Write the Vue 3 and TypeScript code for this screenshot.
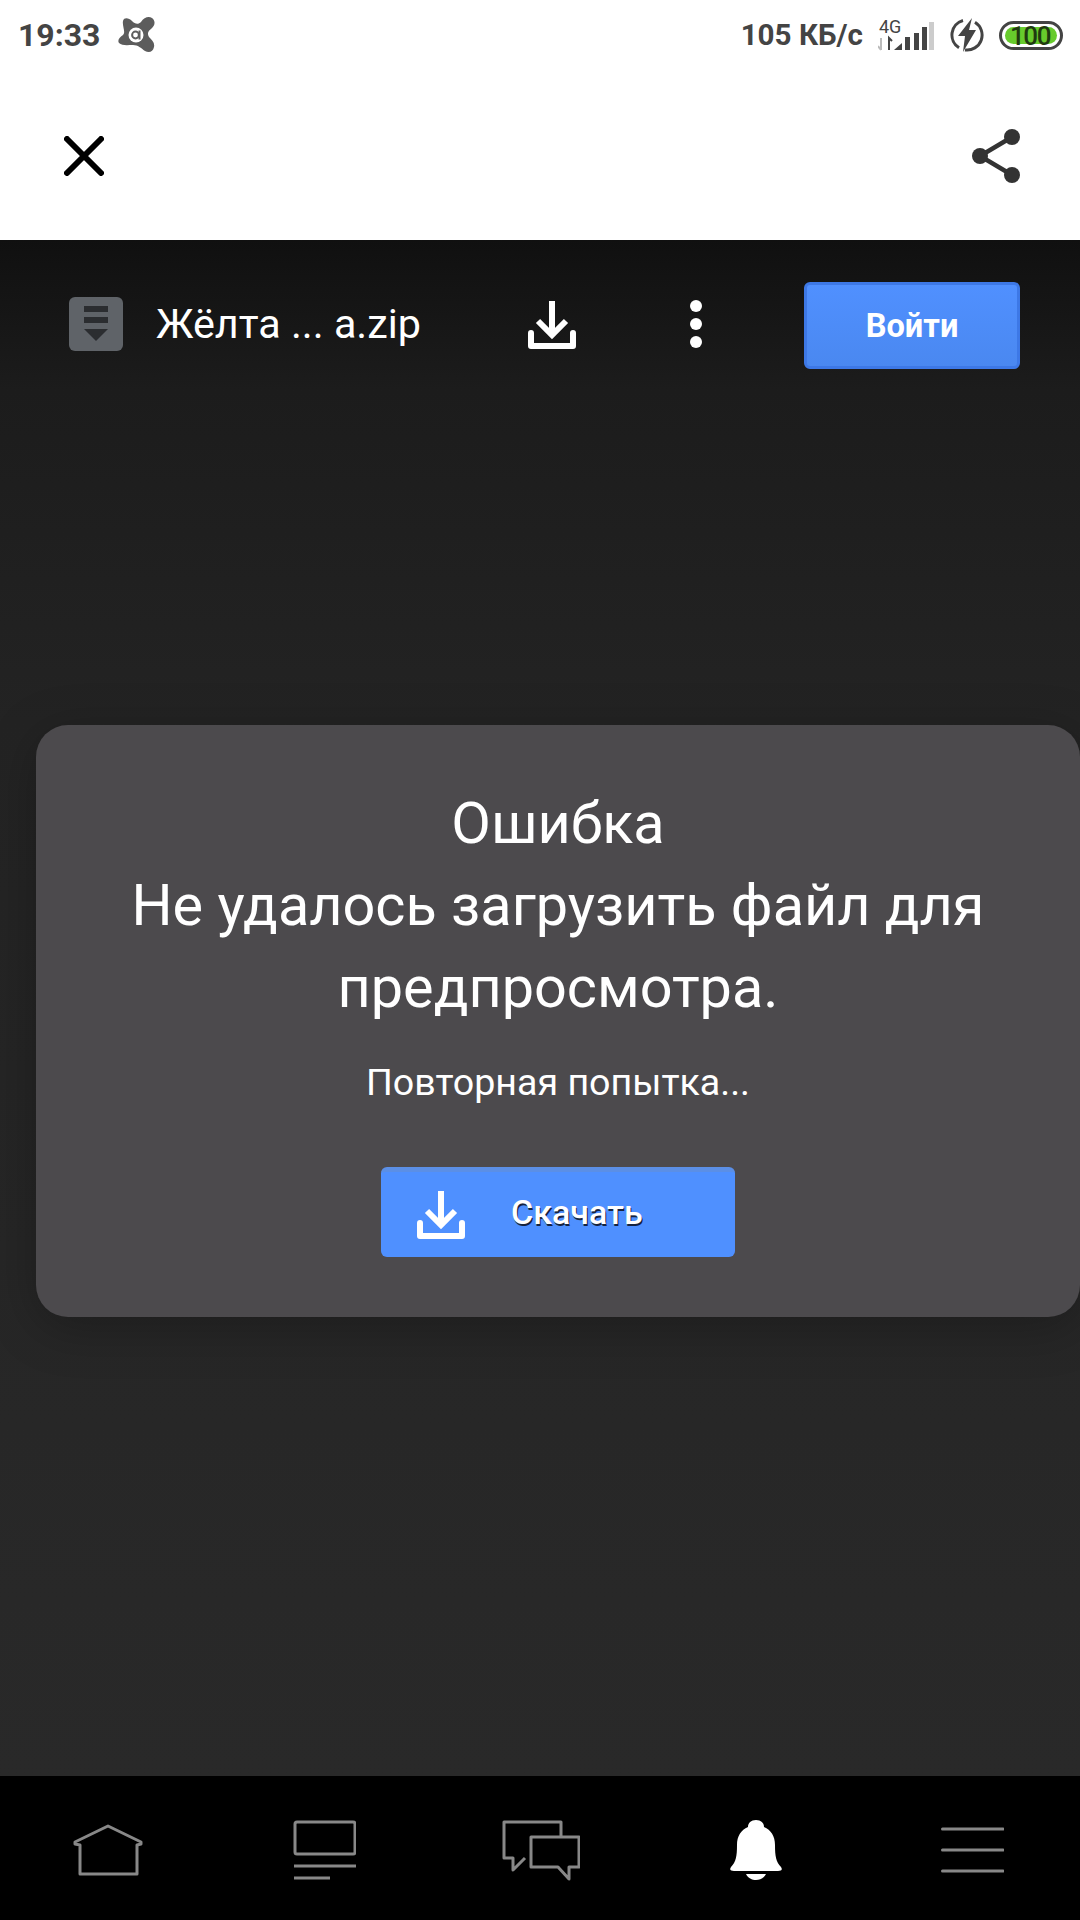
<script setup lang="ts">
const fileName = 'Жёлта ... a.zip';
</script>

<template>
  <div class="screen">
    <!-- Android status bar -->
    <div class="status-bar">
      <div class="status-left">
        <span class="clock">19:33</span>
        <svg class="avast" width="38" height="38" viewBox="0 0 38 38">
          <path d="M5 5 C6 1 11 2 14 5 C17 8 20 9 23 6 C26 1 31 0 34 2 C38 5 37 10 33 13 C30 15 29 18 31 21 C34 24 37 27 36 31 C35 36 31 37 27 35 C23 32 20 29 15 29 C10 29 4 30 1 27 C-1 24 2 21 5 19 C8 16 4 10 5 5 Z" fill="#5c5c5c" />
          <circle cx="18" cy="19" r="7.5" fill="#fff" />
          <circle cx="17.5" cy="19" r="3.4" fill="none" stroke="#5c5c5c" stroke-width="2" />
          <path d="M21.5 14.5 V23.5" stroke="#5c5c5c" stroke-width="2" />
        </svg>
      </div>
      <div class="status-right">
        <span class="speed">105 КБ/с</span>
        <svg class="signal" width="58" height="40" viewBox="0 -6 58 40">
          <text x="1" y="12" class="net-label">4G</text>
          <path d="M3 17 V29 M0 25 L3 29" stroke="#bbb" stroke-width="2" fill="none" />
          <path d="M11 29 V17 L14 20" stroke="#444" stroke-width="2" fill="none" />
          <path d="M16 29 L24 22 V29 Z" fill="#444" />
          <rect x="27" y="16" width="5" height="13" fill="#444" />
          <rect x="36" y="12" width="5" height="17" fill="#444" />
          <rect x="44" y="6" width="5" height="23" fill="#444" />
          <rect x="51" y="1" width="5" height="28" fill="#ccc" />
        </svg>
        <svg class="charge" width="34" height="34" viewBox="0 0 34 34">
          <path d="M13 2.5 A15 15 0 0 0 9 29.7 M25 4.3 A15 15 0 0 1 15 31.9" fill="none" stroke="#444" stroke-width="3" />
          <path d="M22 0 L8 18 H15 L13 34 L26 12 H19 Z" fill="#444" />
        </svg>
        <svg class="battery" width="64" height="29" viewBox="0 0 64 29">
          <rect x="1.5" y="1.5" width="61" height="26" rx="13" fill="none" stroke="#444" stroke-width="3" />
          <rect x="6" y="6" width="52" height="17" rx="8.5" fill="#67cb2c" />
          <text x="31" y="24" text-anchor="middle" class="battery-label">100</text>
        </svg>
      </div>
    </div>

    <!-- White app bar -->
    <header class="app-bar">
      <svg width="40" height="40" viewBox="0 0 40 40">
        <path d="M3 3 L37 37 M37 3 L3 37" stroke="#000" stroke-width="6" stroke-linecap="round" />
      </svg>
      <svg width="50" height="56" viewBox="0 0 50 56">
        <path d="M41 9 L9 28 L41 47" fill="none" stroke="#333" stroke-width="4.5" />
        <circle cx="41" cy="9" r="8" fill="#333" />
        <circle cx="9" cy="28" r="8" fill="#333" />
        <circle cx="41" cy="47" r="8" fill="#333" />
      </svg>
    </header>

    <!-- Drive preview -->
    <main class="viewer">
      <div class="toolbar">
        <div class="file-icon">
          <svg width="26" height="38" viewBox="0 0 26 38">
            <rect x="1" y="1" width="24" height="6" fill="#2b2d30" />
            <rect x="1" y="12" width="24" height="6" fill="#2b2d30" />
            <path d="M1 24 H25 L13 36 Z" fill="#2b2d30" />
          </svg>
        </div>
        <span class="file-name">{{ fileName }}</span>
        <svg class="tool-download" width="48" height="50" viewBox="0 0 48 50">
          <path d="M24 1 V35 M10 21 L24 35 L38 21" fill="none" stroke="#fff" stroke-width="6" />
          <path d="M3 33 V46 H45 V33" fill="none" stroke="#fff" stroke-width="6" stroke-linejoin="round" stroke-linecap="round" />
        </svg>
        <div class="dots">
          <i></i>
          <i></i>
          <i></i>
        </div>
        <button class="login">Войти</button>
      </div>

      <section class="error-card">
        <div class="error-title">Ошибка</div>
        <div class="error-text">Не удалось загрузить файл для предпросмотра.</div>
        <div class="error-retry">Повторная попытка...</div>
        <button class="download-btn">
          <svg width="48" height="50" viewBox="0 0 48 50">
            <path d="M24 1 V35 M10 21 L24 35 L38 21" fill="none" stroke="#fff" stroke-width="6" />
            <path d="M3 33 V46 H45 V33" fill="none" stroke="#fff" stroke-width="6" stroke-linejoin="round" stroke-linecap="round" />
          </svg>
          <span>Скачать</span>
        </button>
      </section>
    </main>

    <!-- Bottom nav -->
    <nav class="bottom-nav">
      <div class="nav-item">
        <svg width="72" height="52" viewBox="0 0 72 52">
          <path d="M36 2 L69 18 V20 L65 21 V50 H8 V21 L3 20 V18 Z" fill="none" stroke="#888" stroke-width="3" stroke-linejoin="round" />
        </svg>
      </div>
      <div class="nav-item">
        <svg width="64" height="60" viewBox="0 0 64 60">
          <rect x="3" y="2" width="60" height="32" rx="2" fill="none" stroke="#888" stroke-width="3" />
          <path d="M2 46 H64 M2 58 H38" stroke="#888" stroke-width="3" />
        </svg>
      </div>
      <div class="nav-item">
        <svg width="80" height="62" viewBox="0 0 80 62">
          <path d="M61 17 V3 H4 V39 H13 V51 L25 39" fill="none" stroke="#888" stroke-width="3" stroke-linejoin="round" />
          <path d="M31 18 H79 V48 H69 V60 L58 48 H31 Z" fill="none" stroke="#888" stroke-width="3" stroke-linejoin="round" />
        </svg>
      </div>
      <div class="nav-item">
        <svg width="52" height="60" viewBox="0 0 52 60">
          <path d="M26 0 C21 0 18 3 18 7 C11 10 7 16 7 25 C7 36 6 42 1 47 C-1 50 1 51 4 51 H48 C51 51 53 50 51 47 C46 42 45 36 45 25 C45 16 41 10 34 7 C34 3 31 0 26 0 Z" fill="#fff" />
          <path d="M16 54 H36 C34 58 30 60 26 60 C22 60 18 58 16 54 Z" fill="#fff" />
        </svg>
      </div>
      <div class="nav-item">
        <svg width="64" height="46" viewBox="0 0 64 46">
          <path d="M2.5 2 H63 M2.5 23 H63 M2.5 44 H63" stroke="#888" stroke-width="3" stroke-linecap="round" />
        </svg>
      </div>
    </nav>
  </div>
</template>

<style>
html,
body {
  margin: 0;
  background: #fff;
}
</style>

<style scoped>
.screen {
  width: 1080px;
  height: 1920px;
  display: flex;
  flex-direction: column;
  overflow: hidden;
  font-family: Roboto, "Noto Sans", sans-serif;
}

.status-bar {
  height: 70px;
  display: flex;
  justify-content: space-between;
  align-items: center;
  padding: 0 17px 0 18px;
  background: #fff;
  color: #444;
}

.status-left,
.status-right {
  display: flex;
  align-items: center;
}

.clock {
  font-size: 32px;
  font-weight: 700;
}

.speed {
  font-size: 29.6px;
  font-weight: 700;
}

.avast {
  margin-left: 18px;
}

.signal {
  margin-left: 15px;
}

.charge {
  margin-left: 14px;
}

.battery {
  margin-left: 15px;
}

.net-label {
  font-size: 18px;
  fill: #444;
}

.battery-label {
  font-size: 26px;
  font-weight: 500;
  fill: #1f3a10;
  letter-spacing: -1.5px;
}

.app-bar {
  height: 170px;
  box-sizing: border-box;
  display: flex;
  justify-content: space-between;
  align-items: center;
  padding: 2px 59px 0 64px;
  background: #fff;
}

.viewer {
  flex: 1;
  display: flex;
  flex-direction: column;
  background: linear-gradient(#101010 0, #1c1c1c 150px, #232323 480px, #292929 100%);
}

.toolbar {
  height: 485px;
  display: flex;
  align-items: flex-start;
  padding: 42px 60px 0 69px;
  box-sizing: border-box;
}

.file-icon {
  width: 54px;
  height: 54px;
  margin-top: 15px;
  border-radius: 6px;
  background: #5f6368;
  display: flex;
  align-items: center;
  justify-content: center;
}

.file-name {
  width: 372px;
  margin-left: 33px;
  margin-top: 18px;
  font-size: 41.3px;
  line-height: 48px;
  color: #fff;
}

.tool-download {
  margin-top: 18px;
}

.dots {
  width: 12px;
  margin-left: 114px;
  margin-top: 18px;
  display: flex;
  flex-direction: column;
  gap: 6px;
}

.dots i {
  width: 12px;
  height: 12px;
  border-radius: 50%;
  background: #fff;
}

.login {
  width: 216px;
  height: 87px;
  margin-left: 102px;
  flex-shrink: 0;
  border: 3px solid #3d78e6;
  border-radius: 6px;
  background: linear-gradient(#5090ff, #4a88f0);
  color: #fff;
  font-family: Roboto, sans-serif;
  font-size: 32.6px;
  font-weight: 700;
}

.error-card {
  margin-left: 36px;
  height: 592px;
  box-sizing: border-box;
  padding-top: 58px;
  display: flex;
  flex-direction: column;
  align-items: center;
  border-radius: 32px;
  background: #4c4a4d;
  color: #fff;
  box-shadow: 0 10px 50px rgba(0, 0, 0, 0.25);
  text-align: center;
}

.error-title,
.error-text {
  font-size: 57.6px;
  line-height: 82px;
}

.error-text {
  width: 900px;
}

.error-retry {
  margin-top: 30px;
  font-size: 37.6px;
  line-height: 46px;
}

.download-btn {
  width: 354px;
  height: 90px;
  margin-top: 62px;
  padding: 0 0 0 36px;
  display: flex;
  align-items: center;
  border: 0;
  border-top: 5px solid #5b8fe6;
  border-radius: 6px;
  background: #4f90ff;
  color: #fff;
  font-family: Roboto, sans-serif;
  font-size: 34px;
  font-weight: 500;
  text-shadow: 1px 2px 0 #16233f;
}

.download-btn span {
  margin-left: 46px;
  margin-bottom: 6px;
}

.bottom-nav {
  height: 144px;
  display: grid;
  grid-template-columns: repeat(5, 1fr);
  background: #000;
}

.nav-item {
  display: flex;
  align-items: center;
  justify-content: center;
  padding-top: 4px;
}
</style>
